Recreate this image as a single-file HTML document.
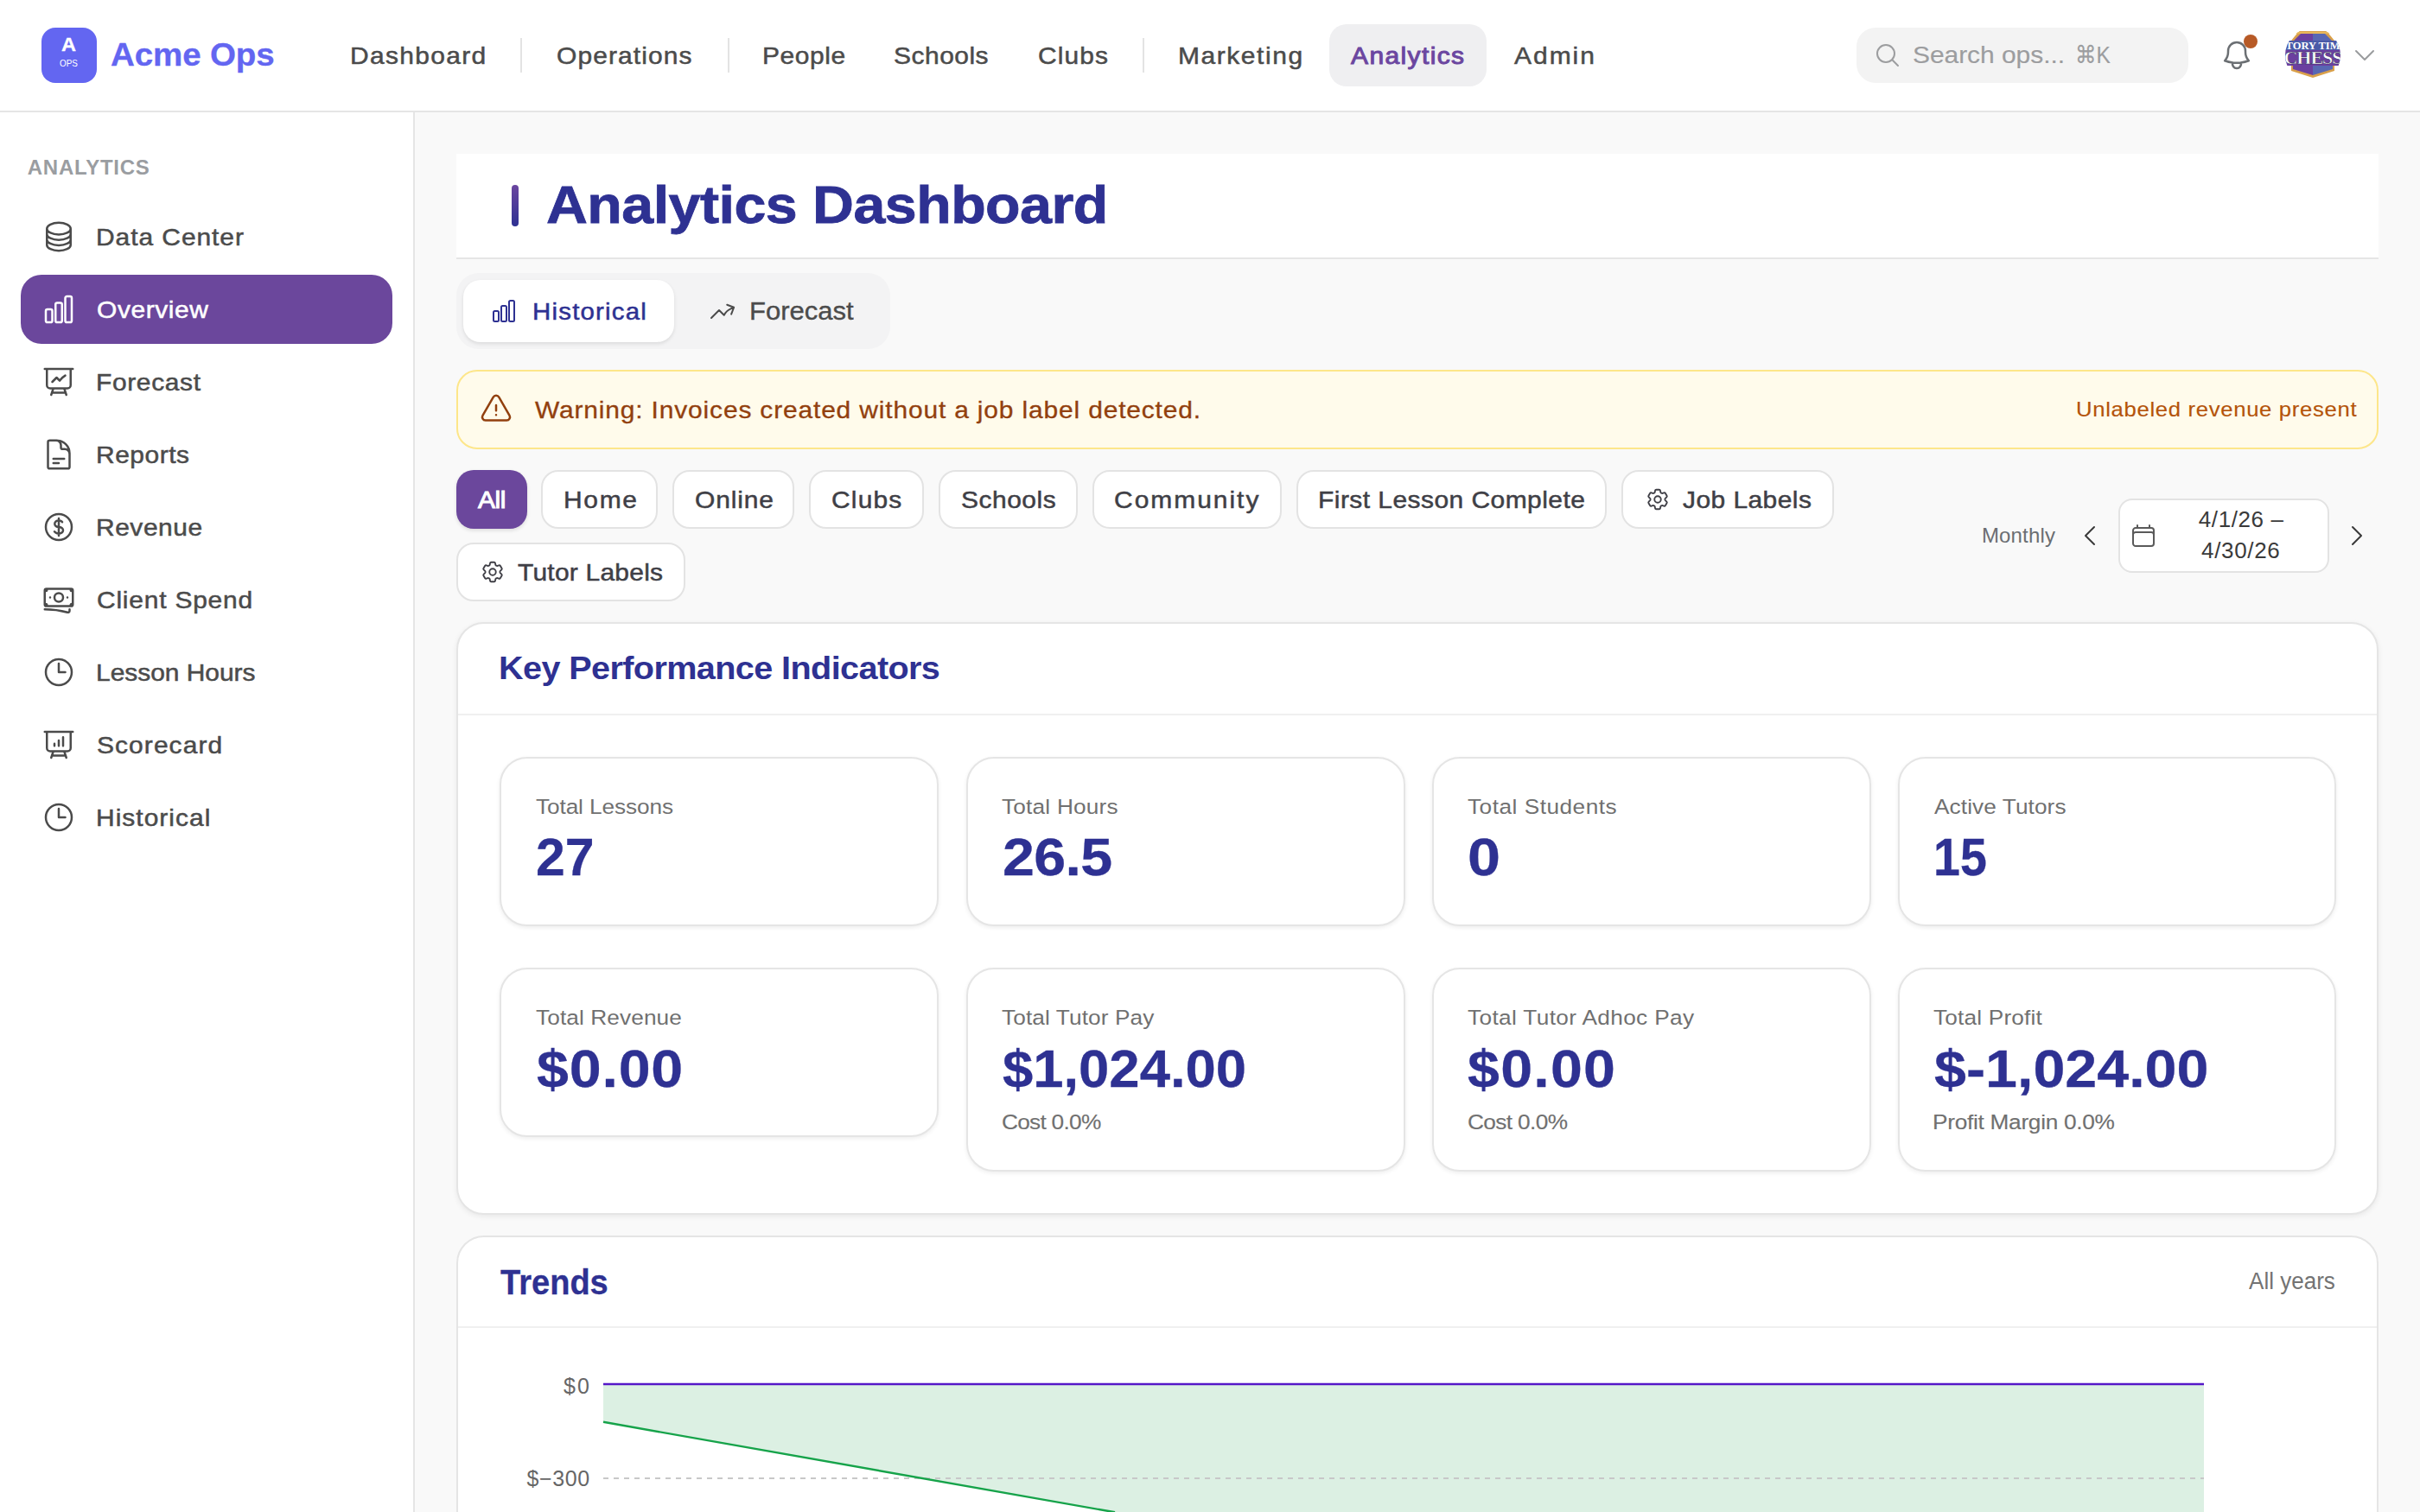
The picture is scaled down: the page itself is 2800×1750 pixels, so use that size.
<!DOCTYPE html>
<html><head><meta charset="utf-8"><title>Analytics Dashboard</title>
<style>
html,body{margin:0;padding:0;width:2800px;height:1750px;overflow:hidden;background:#fafafa;}
#root{position:relative;width:2800px;height:1750px;overflow:hidden;background:#f9f9f9;font-family:"Liberation Sans",sans-serif;}
.b{position:absolute;box-sizing:border-box;}
.t{position:absolute;white-space:nowrap;font-family:"Liberation Sans",sans-serif;}
.kc{border-radius:32px;background:#fff;border:2px solid #e5e5e5;box-shadow:0 2px 5px rgba(0,0,0,0.07);}
svg.i{position:absolute;overflow:visible;fill:none;stroke-linecap:round;stroke-linejoin:round;}
@media (max-width:2000px){#root{zoom:0.5;}html,body{width:1400px;height:875px;}}
</style></head><body><div id="root">
<!-- header -->
<div class="b" style="left:0;top:0;width:2800px;height:130px;background:#fff;border-bottom:2px solid #e5e5e5;"></div>
<div class="b" style="left:48px;top:32px;width:64px;height:64px;border-radius:16px;background:#6366f1;"></div>
<div class="b" style="left:602px;top:44px;width:2px;height:40px;background:#e3e3e3;"></div>
<div class="b" style="left:842px;top:44px;width:2px;height:40px;background:#e3e3e3;"></div>
<div class="b" style="left:1322px;top:44px;width:2px;height:40px;background:#e3e3e3;"></div>
<div class="b" style="left:1538px;top:28px;width:182px;height:72px;border-radius:20px;background:#efeff1;"></div>
<div class="b" style="left:2148px;top:32px;width:384px;height:64px;border-radius:22px;background:#f3f3f3;"></div>
<svg class="i" style="left:2168px;top:48px;width:32px;height:32px;stroke:#9c9d9f;stroke-width:1.5" viewBox="0 0 24 24"><path d="m21 21-5.197-5.197m0 0A7.5 7.5 0 1 0 5.196 5.196a7.5 7.5 0 0 0 10.607 10.607Z"/></svg>
<svg class="i" style="left:2568px;top:44px;width:40px;height:40px;stroke:#6b6f73;stroke-width:1.5" viewBox="0 0 24 24"><path d="M14.857 17.082a23.848 23.848 0 0 0 5.454-1.31A8.967 8.967 0 0 1 18 9.75V9A6 6 0 0 0 6 9v.75a8.967 8.967 0 0 1-2.312 6.022c1.733.64 3.56 1.085 5.455 1.31m5.714 0a24.255 24.255 0 0 1-5.714 0m5.714 0a3 3 0 1 1-5.714 0"/></svg>
<div class="b" style="left:2596px;top:40px;width:16px;height:16px;border-radius:8px;background:#b75a26;"></div>
<svg class="i" style="left:2644px;top:32px;width:64px;height:64px;" viewBox="0 0 64 64">
<defs><clipPath id="avc"><circle cx="32" cy="32" r="32"/></clipPath></defs>
<g clip-path="url(#avc)">
<polygon points="16,4 48,4 57,15 57,50 32,58 7,50 7,15" fill="#d9a04a"/>
<polygon points="18,7 32,7 32,55 9,48 9,16" fill="#6b3fa0"/>
<polygon points="32,7 46,7 55,16 55,48 32,55" fill="#5867b3"/>
<rect x="0" y="15" width="64" height="11" fill="#4a5aa8"/>
<text x="32" y="24.5" text-anchor="middle" font-family="Liberation Serif" font-weight="700" font-size="12.5" fill="#fff">TORY TIM</text>
<rect x="0" y="26" width="64" height="18" fill="#6b3fa0"/>
<text x="32" y="42" text-anchor="middle" font-family="Liberation Serif" font-weight="700" font-size="22" fill="#fff" stroke="#2a2a55" stroke-width="0.5" letter-spacing="-1">CHESS</text>
<rect x="0" y="5" width="64" height="2" fill="#e8b85a"/>
</g></svg>
<svg class="i" style="left:2720px;top:48px;width:32px;height:32px;stroke:#9a9c9e;stroke-width:1.5" viewBox="0 0 24 24"><path d="m19.5 8.25-7.5 7.5-7.5-7.5"/></svg>

<!-- sidebar -->
<div class="b" style="left:0;top:130px;width:480px;height:1620px;background:#fff;border-right:2px solid #e5e5e5;"></div>
<div class="b" style="left:24px;top:318px;width:430px;height:80px;border-radius:24px;background:#6b479c;"></div>
<svg class="i" style="left:48px;top:254px;width:40px;height:40px;stroke:#4b4b4b;stroke-width:1.5" viewBox="0 0 24 24"><path d="M20.25 6.375c0 2.278-3.694 4.125-8.25 4.125S3.75 8.653 3.75 6.375m16.5 0c0-2.278-3.694-4.125-8.25-4.125S3.75 4.097 3.75 6.375m16.5 0v11.25c0 2.278-3.694 4.125-8.25 4.125s-8.25-1.847-8.25-4.125V6.375m16.5 0v3.75m-16.5-3.75v3.75m16.5 0v3.75C20.250 16.153 16.556 18 12 18s-8.25-1.847-8.25-4.125v-3.75m16.5 0c0 2.278-3.694 4.125-8.25 4.125s-8.25-1.847-8.25-4.125"/></svg>
<svg class="i" style="left:48px;top:338px;width:40px;height:40px;stroke:#ffffff;stroke-width:1.5" viewBox="0 0 24 24"><path d="M3 13.125C3 12.504 3.504 12 4.125 12h2.25c.621 0 1.125.504 1.125 1.125v6.75C7.5 20.496 6.996 21 6.375 21h-2.25A1.125 1.125 0 0 1 3 19.875v-6.75ZM9.75 8.625c0-.621.504-1.125 1.125-1.125h2.25c.621 0 1.125.504 1.125 1.125v11.25c0 .621-.504 1.125-1.125 1.125h-2.25a1.125 1.125 0 0 1-1.125-1.125V8.625ZM16.5 4.125c0-.621.504-1.125 1.125-1.125h2.25C20.496 3 21 3.504 21 4.125v15.75c0 .621-.504 1.125-1.125 1.125h-2.25a1.125 1.125 0 0 1-1.125-1.125V4.125Z"/></svg>
<svg class="i" style="left:48px;top:422px;width:40px;height:40px;stroke:#4b4b4b;stroke-width:1.5" viewBox="0 0 24 24"><path d="M3.75 3v11.250A2.250 2.250 0 0 0 6 16.500h2.250M3.750 3h-1.500m1.500 0h16.500m0 0h1.500m-1.500 0v11.250A2.250 2.250 0 0 1 18 16.500h-2.250m-7.500 0h7.500m-7.500 0-1 3m8.500-3 1 3m0 0 .5 1.500m-.5-1.500h-9.500m0 0-.5 1.500m.750-9 3-3 2.148 2.148A12.061 12.061 0 0 1 16.500 7.605"/></svg>
<svg class="i" style="left:48px;top:506px;width:40px;height:40px;stroke:#4b4b4b;stroke-width:1.5" viewBox="0 0 24 24"><path d="M19.5 14.25v-2.625a3.375 3.375 0 0 0-3.375-3.375h-1.5A1.125 1.125 0 0 1 13.5 7.125v-1.5a3.375 3.375 0 0 0-3.375-3.375H8.25m0 12.75h7.5m-7.5 3H12M10.5 2.25H5.625c-.621 0-1.125.504-1.125 1.125v17.25c0 .621.504 1.125 1.125 1.125h12.75c.621 0 1.125-.504 1.125-1.125V11.25a9 9 0 0 0-9-9Z"/></svg>
<svg class="i" style="left:48px;top:590px;width:40px;height:40px;stroke:#4b4b4b;stroke-width:1.5" viewBox="0 0 24 24"><path d="M12 6v12m-3-2.818.879.659c1.171.879 3.07.879 4.242 0 1.172-.879 1.172-2.303 0-3.182C13.536 12.219 12.768 12 12 12c-.725 0-1.45-.22-2.003-.659-1.106-.879-1.106-2.303 0-3.182s2.9-.879 4.006 0l.415.33M21 12a9 9 0 1 1-18 0 9 9 0 0 1 18 0Z"/></svg>
<svg class="i" style="left:48px;top:674px;width:40px;height:40px;stroke:#4b4b4b;stroke-width:1.5" viewBox="0 0 24 24"><path d="M2.25 18.75a60.07 60.07 0 0 1 15.797 2.101c.727.198 1.453-.342 1.453-1.096V18.75M3.75 4.5v.75A.75.75 0 0 1 3 6h-.75m0 0v-.375c0-.621.504-1.125 1.125-1.125H20.25M2.25 6v9m18-10.5v.75c0 .414.336.75.75.75h.75m-1.5-1.5h.375c.621 0 1.125.504 1.125 1.125v9.75c0 .621-.504 1.125-1.125 1.125h-.375m1.5-1.5H21a.75.75 0 0 0-.75.75v.75m0 0H3.75m0 0h-.375a1.125 1.125 0 0 1-1.125-1.125V15m1.5 1.5v-.75A.75.75 0 0 0 3 15h-.75M15 10.5a3 3 0 1 1-6 0 3 3 0 0 1 6 0Zm3 0h.008v.008H18V10.5Zm-12 0h.008v.008H6V10.5Z"/></svg>
<svg class="i" style="left:48px;top:758px;width:40px;height:40px;stroke:#4b4b4b;stroke-width:1.5" viewBox="0 0 24 24"><path d="M12 6v6h4.5m4.5 0a9 9 0 1 1-18 0 9 9 0 0 1 18 0Z"/></svg>
<svg class="i" style="left:48px;top:842px;width:40px;height:40px;stroke:#4b4b4b;stroke-width:1.5" viewBox="0 0 24 24"><path d="M3.75 3v11.25A2.25 2.25 0 0 0 6 16.5h2.25M3.75 3h-1.5m1.5 0h16.5m0 0h1.5m-1.5 0v11.25A2.25 2.25 0 0 1 18 16.5h-2.25m-7.5 0h7.5m-7.5 0-1 3m8.5-3 1 3m0 0 .5 1.5m-.5-1.5h-9.5m0 0-.5 1.5M9 11.25v1.5M12 9v3.75m3-6v6"/></svg>
<svg class="i" style="left:48px;top:926px;width:40px;height:40px;stroke:#4b4b4b;stroke-width:1.5" viewBox="0 0 24 24"><path d="M12 6v6h4.5m4.5 0a9 9 0 1 1-18 0 9 9 0 0 1 18 0Z"/></svg>

<!-- title card -->
<div class="b" style="left:528px;top:178px;width:2224px;height:122px;background:#fff;border-bottom:2px solid #e5e5e5;"></div>
<div class="b" style="left:592px;top:214px;width:8px;height:48px;border-radius:4px;background:linear-gradient(#6b46a0,#2e3192);"></div>

<!-- tabs -->
<div class="b" style="left:528px;top:316px;width:502px;height:88px;border-radius:26px;background:#f3f3f4;"></div>
<div class="b" style="left:536px;top:324px;width:244px;height:72px;border-radius:20px;background:#fff;box-shadow:0 2px 4px rgba(0,0,0,0.10);"></div>
<svg class="i" style="left:567px;top:344px;width:32px;height:32px;stroke:#2e3192;stroke-width:1.5" viewBox="0 0 24 24"><path d="M3 13.125C3 12.504 3.504 12 4.125 12h2.25c.621 0 1.125.504 1.125 1.125v6.75C7.5 20.496 6.996 21 6.375 21h-2.25A1.125 1.125 0 0 1 3 19.875v-6.75ZM9.75 8.625c0-.621.504-1.125 1.125-1.125h2.25c.621 0 1.125.504 1.125 1.125v11.25c0 .621-.504 1.125-1.125 1.125h-2.25a1.125 1.125 0 0 1-1.125-1.125V8.625ZM16.5 4.125c0-.621.504-1.125 1.125-1.125h2.25C20.496 3 21 3.504 21 4.125v15.75c0 .621-.504 1.125-1.125 1.125h-2.25a1.125 1.125 0 0 1-1.125-1.125V4.125Z"/></svg>
<svg class="i" style="left:820px;top:344px;width:32px;height:32px;stroke:#4b4b4b;stroke-width:1.5" viewBox="0 0 24 24"><path d="M2.25 18 9 11.25l4.306 4.306a11.95 11.95 0 0 1 5.814-5.518l2.74-1.22m0 0-5.94-2.281m5.94 2.28-2.28 5.941"/></svg>

<!-- warning -->
<div class="b" style="left:528px;top:428px;width:2224px;height:92px;border-radius:24px;background:#fffbeb;border:2px solid #fde68a;"></div>
<svg class="i" style="left:554px;top:454px;width:40px;height:40px;stroke:#92400e;stroke-width:1.5" viewBox="0 0 24 24"><path d="M12 9v3.75m-9.303 3.376c-.866 1.5.217 3.374 1.948 3.374h14.71c1.73 0 2.813-1.874 1.948-3.374L13.949 3.378c-.866-1.5-3.032-1.5-3.898 0L2.697 16.126ZM12 15.75h.007v.008H12v-.008Z"/></svg>

<!-- chips -->
<div class="b" style="left:528px;top:544px;width:82px;height:68px;border-radius:20px;background:#6b479c;box-shadow:0 2px 4px rgba(0,0,0,0.12);"></div>
<div class="b chip" style="left:626px;top:544px;width:135px;height:68px;border-radius:20px;background:#fff;border:2px solid #e3e3e3;"></div>
<div class="b chip" style="left:778px;top:544px;width:141px;height:68px;border-radius:20px;background:#fff;border:2px solid #e3e3e3;"></div>
<div class="b chip" style="left:936px;top:544px;width:133px;height:68px;border-radius:20px;background:#fff;border:2px solid #e3e3e3;"></div>
<div class="b chip" style="left:1086px;top:544px;width:161px;height:68px;border-radius:20px;background:#fff;border:2px solid #e3e3e3;"></div>
<div class="b chip" style="left:1264px;top:544px;width:219px;height:68px;border-radius:20px;background:#fff;border:2px solid #e3e3e3;"></div>
<div class="b chip" style="left:1500px;top:544px;width:359px;height:68px;border-radius:20px;background:#fff;border:2px solid #e3e3e3;"></div>
<div class="b chip" style="left:1876px;top:544px;width:246px;height:68px;border-radius:20px;background:#fff;border:2px solid #e3e3e3;"></div>
<div class="b chip" style="left:528px;top:628px;width:265px;height:68px;border-radius:20px;background:#fff;border:2px solid #e3e3e3;"></div>
<svg class="i" style="left:1903px;top:563px;width:30px;height:30px;stroke:#3f3f46;stroke-width:1.5" viewBox="0 0 24 24"><path d="M9.594 3.94c.09-.542.56-.94 1.11-.94h2.593c.55 0 1.02.398 1.11.94l.213 1.281c.063.374.313.686.645.87.074.04.147.083.22.127.325.196.72.257 1.075.124l1.217-.456a1.125 1.125 0 0 1 1.37.49l1.296 2.247a1.125 1.125 0 0 1-.26 1.431l-1.003.827c-.293.241-.438.613-.43.992a7.723 7.723 0 0 1 0 .255c-.008.378.137.75.43.991l1.004.827c.424.35.534.955.26 1.43l-1.298 2.247a1.125 1.125 0 0 1-1.369.491l-1.217-.456c-.355-.133-.75-.072-1.076.124a6.47 6.47 0 0 1-.22.128c-.331.183-.581.495-.644.869l-.213 1.281c-.09.543-.56.94-1.11.94h-2.594c-.55 0-1.019-.398-1.11-.94l-.213-1.281c-.062-.374-.312-.686-.644-.87a6.52 6.520 0 0 1-.22-.127c-.325-.196-.72-.257-1.076-.124l-1.217.456a1.125 1.125 0 0 1-1.369-.49l-1.297-2.247a1.125 1.125 0 0 1 .26-1.431l1.004-.827c.292-.24.437-.613.43-.991a6.932 6.932 0 0 1 0-.255c.007-.38-.138-.751-.43-.992l-1.004-.827a1.125 1.125 0 0 1-.26-1.43l1.297-2.247a1.125 1.125 0 0 1 1.37-.491l1.216.456c.356.133.751.072 1.076-.124.072-.044.146-.086.22-.128.332-.183.582-.495.644-.869l.214-1.28Z"/><path d="M15 12a3 3 0 1 1-6 0 3 3 0 0 1 6 0Z"/></svg>
<svg class="i" style="left:555px;top:647px;width:30px;height:30px;stroke:#3f3f46;stroke-width:1.5" viewBox="0 0 24 24"><path d="M9.594 3.94c.09-.542.56-.94 1.11-.94h2.593c.55 0 1.02.398 1.11.94l.213 1.281c.063.374.313.686.645.87.074.04.147.083.22.127.325.196.72.257 1.075.124l1.217-.456a1.125 1.125 0 0 1 1.37.49l1.296 2.247a1.125 1.125 0 0 1-.26 1.431l-1.003.827c-.293.241-.438.613-.43.992a7.723 7.723 0 0 1 0 .255c-.008.378.137.75.43.991l1.004.827c.424.35.534.955.26 1.43l-1.298 2.247a1.125 1.125 0 0 1-1.369.491l-1.217-.456c-.355-.133-.75-.072-1.076.124a6.47 6.47 0 0 1-.22.128c-.331.183-.581.495-.644.869l-.213 1.281c-.09.543-.56.94-1.110.94h-2.594c-.55 0-1.019-.398-1.11-.94l-.213-1.281c-.062-.374-.312-.686-.644-.87a6.52 6.52 0 0 1-.22-.127c-.325-.196-.72-.257-1.076-.124l-1.217.456a1.125 1.125 0 0 1-1.369-.49l-1.297-2.247a1.125 1.125 0 0 1 .26-1.431l1.004-.827c.292-.24.437-.613.43-.991a6.932 6.932 0 0 1 0-.255c.007-.38-.138-.751-.43-.992l-1.004-.827a1.125 1.125 0 0 1-.26-1.43l1.297-2.247a1.125 1.125 0 0 1 1.37-.491l1.216.456c.356.133.751.072 1.076-.124.072-.044.146-.086.22-.128.332-.183.582-.495.644-.869l.214-1.28Z"/><path d="M15 12a3 3 0 1 1-6 0 3 3 0 0 1 6 0Z"/></svg>

<!-- date controls -->
<svg class="i" style="left:2402px;top:604px;width:32px;height:32px;stroke:#3a3a3a;stroke-width:1.5" viewBox="0 0 24 24"><path d="M15.75 19.5 8.25 12l7.5-7.5"/></svg>
<div class="b" style="left:2451px;top:577px;width:244px;height:86px;border-radius:16px;background:#fff;border:2px solid #e3e3e3;"></div>
<svg class="i" style="left:2464px;top:604px;width:32px;height:32px;stroke:#5a5a5a;stroke-width:1.5" viewBox="0 0 24 24"><path d="M6.75 3v2.25M17.25 3v2.25M3 18.75V7.5a2.25 2.25 0 0 1 2.25-2.25h13.5A2.25 2.25 0 0 1 21 7.5v11.25m-18 0A2.25 2.25 0 0 0 5.25 21h13.5A2.25 2.25 0 0 0 21 18.75m-18 0v-7.5A2.25 2.25 0 0 1 5.25 9h13.5A2.25 2.25 0 0 1 21 11.25v7.5"/></svg>
<svg class="i" style="left:2711px;top:604px;width:32px;height:32px;stroke:#3a3a3a;stroke-width:1.5" viewBox="0 0 24 24"><path d="m8.25 4.5 7.5 7.5-7.5 7.5"/></svg>

<!-- KPI card -->
<div class="b" style="left:528px;top:720px;width:2224px;height:686px;border-radius:32px;background:#fff;border:2px solid #e5e5e5;box-shadow:0 2px 6px rgba(0,0,0,0.07);"></div>
<div class="b" style="left:530px;top:826px;width:2220px;height:2px;background:#f0f0f0;"></div>
<div class="b kc" style="left:578px;top:876px;width:508px;height:196px;"></div>
<div class="b kc" style="left:1118px;top:876px;width:508px;height:196px;"></div>
<div class="b kc" style="left:1657px;top:876px;width:508px;height:196px;"></div>
<div class="b kc" style="left:2196px;top:876px;width:507px;height:196px;"></div>
<div class="b kc" style="left:578px;top:1120px;width:508px;height:196px;"></div>
<div class="b kc" style="left:1118px;top:1120px;width:508px;height:236px;"></div>
<div class="b kc" style="left:1657px;top:1120px;width:508px;height:236px;"></div>
<div class="b kc" style="left:2196px;top:1120px;width:507px;height:236px;"></div>

<!-- trends card -->
<div class="b" style="left:528px;top:1430px;width:2224px;height:400px;border-radius:32px;background:#fff;border:2px solid #e5e5e5;"></div>
<div class="b" style="left:530px;top:1535px;width:2220px;height:2px;background:#f0f0f0;"></div>
<svg style="position:absolute;left:0;top:0;width:2800px;height:1750px;" viewBox="0 0 2800 1750">
<polygon points="698,1602 2550,1602 2550,1750 1290,1750 698,1645.5" fill="#dcf0e3"/>
<line x1="698" y1="1711" x2="2550" y2="1711" stroke="#c8c8c8" stroke-width="2" stroke-dasharray="6 6"/>
<line x1="698" y1="1602" x2="2550" y2="1602" stroke="#5518c8" stroke-width="2.4"/>
<line x1="698" y1="1645.8" x2="1290" y2="1750.3" stroke="#16a34a" stroke-width="2.4"/>
</svg>
<div class="t" style="left:71.0px;top:41.0px;font-size:22px;line-height:22px;color:#ffffff;font-weight:700;transform:scaleX(1.0700);transform-origin:0 0;-webkit-text-stroke:0.3px #ffffff;">A</div>
<div class="t" style="left:69.4px;top:68.0px;font-size:11px;line-height:11px;color:#ffffff;transform:scaleX(0.9043);transform-origin:0 0;">OPS</div>
<div class="t" style="left:127.6px;top:46.0px;font-size:36px;line-height:36px;color:#6366f1;font-weight:700;letter-spacing:-0.11px;transform:scaleX(1.0700);transform-origin:0 0;-webkit-text-stroke:0.3px #6366f1;">Acme Ops</div>
<div class="t" style="left:405.0px;top:51.0px;font-size:28px;line-height:28px;color:#4b4b4b;letter-spacing:1.24px;transform:scaleX(1.0700);transform-origin:0 0;-webkit-text-stroke:0.5px #4b4b4b;">Dashboard</div>
<div class="t" style="left:644.0px;top:51.0px;font-size:28px;line-height:28px;color:#4b4b4b;letter-spacing:1.04px;transform:scaleX(1.0700);transform-origin:0 0;-webkit-text-stroke:0.5px #4b4b4b;">Operations</div>
<div class="t" style="left:882.0px;top:51.0px;font-size:28px;line-height:28px;color:#4b4b4b;letter-spacing:0.56px;transform:scaleX(1.0700);transform-origin:0 0;-webkit-text-stroke:0.5px #4b4b4b;">People</div>
<div class="t" style="left:1034.0px;top:51.0px;font-size:28px;line-height:28px;color:#4b4b4b;letter-spacing:0.47px;transform:scaleX(1.0700);transform-origin:0 0;-webkit-text-stroke:0.5px #4b4b4b;">Schools</div>
<div class="t" style="left:1200.5px;top:51.0px;font-size:28px;line-height:28px;color:#4b4b4b;letter-spacing:1.05px;transform:scaleX(1.0700);transform-origin:0 0;-webkit-text-stroke:0.5px #4b4b4b;">Clubs</div>
<div class="t" style="left:1362.5px;top:51.0px;font-size:28px;line-height:28px;color:#4b4b4b;letter-spacing:1.46px;transform:scaleX(1.0700);transform-origin:0 0;-webkit-text-stroke:0.5px #4b4b4b;">Marketing</div>
<div class="t" style="left:1562.8px;top:51.0px;font-size:28px;line-height:28px;color:#6b46a0;letter-spacing:1.31px;transform:scaleX(1.0700);transform-origin:0 0;-webkit-text-stroke:1.0px #6b46a0;">Analytics</div>
<div class="t" style="left:1752.0px;top:51.0px;font-size:28px;line-height:28px;color:#4b4b4b;letter-spacing:1.87px;transform:scaleX(1.0700);transform-origin:0 0;-webkit-text-stroke:0.5px #4b4b4b;">Admin</div>
<div class="t" style="left:2212.5px;top:50.4px;font-size:28px;line-height:28px;color:#9c9d9f;letter-spacing:-0.04px;transform:scaleX(1.0700);transform-origin:0 0;-webkit-text-stroke:0.15px #9c9d9f;">Search ops...</div>
<div class="t" style="left:2401.3px;top:50.4px;font-size:28px;line-height:28px;color:#9c9d9f;transform:scaleX(0.8742);transform-origin:0 0;-webkit-text-stroke:0.15px #9c9d9f;">⌘K</div>
<div class="t" style="left:31.8px;top:181.8px;font-size:24px;line-height:24px;color:#9a9da1;font-weight:700;letter-spacing:0.74px;">ANALYTICS</div>
<div class="t" style="left:111.4px;top:261.0px;font-size:28px;line-height:28px;color:#4b4b4b;letter-spacing:0.88px;transform:scaleX(1.0700);transform-origin:0 0;-webkit-text-stroke:0.5px #4b4b4b;">Data Center</div>
<div class="t" style="left:112.4px;top:345.0px;font-size:28px;line-height:28px;color:#ffffff;letter-spacing:0.55px;transform:scaleX(1.0700);transform-origin:0 0;-webkit-text-stroke:0.5px #ffffff;">Overview</div>
<div class="t" style="left:111.4px;top:429.0px;font-size:28px;line-height:28px;color:#4b4b4b;letter-spacing:0.59px;transform:scaleX(1.0700);transform-origin:0 0;-webkit-text-stroke:0.5px #4b4b4b;">Forecast</div>
<div class="t" style="left:111.4px;top:513.0px;font-size:28px;line-height:28px;color:#4b4b4b;letter-spacing:0.48px;transform:scaleX(1.0700);transform-origin:0 0;-webkit-text-stroke:0.5px #4b4b4b;">Reports</div>
<div class="t" style="left:111.4px;top:597.0px;font-size:28px;line-height:28px;color:#4b4b4b;letter-spacing:0.50px;transform:scaleX(1.0700);transform-origin:0 0;-webkit-text-stroke:0.5px #4b4b4b;">Revenue</div>
<div class="t" style="left:112.4px;top:681.0px;font-size:28px;line-height:28px;color:#4b4b4b;letter-spacing:0.73px;transform:scaleX(1.0700);transform-origin:0 0;-webkit-text-stroke:0.5px #4b4b4b;">Client Spend</div>
<div class="t" style="left:111.4px;top:765.0px;font-size:28px;line-height:28px;color:#4b4b4b;letter-spacing:-0.03px;transform:scaleX(1.0700);transform-origin:0 0;-webkit-text-stroke:0.5px #4b4b4b;">Lesson Hours</div>
<div class="t" style="left:112.4px;top:849.0px;font-size:28px;line-height:28px;color:#4b4b4b;letter-spacing:1.00px;transform:scaleX(1.0700);transform-origin:0 0;-webkit-text-stroke:0.5px #4b4b4b;">Scorecard</div>
<div class="t" style="left:111.4px;top:933.0px;font-size:28px;line-height:28px;color:#4b4b4b;letter-spacing:0.95px;transform:scaleX(1.0700);transform-origin:0 0;-webkit-text-stroke:0.5px #4b4b4b;">Historical</div>
<div class="t" style="left:632.0px;top:206.0px;font-size:62px;line-height:62px;color:#2e3192;font-weight:700;letter-spacing:-0.50px;transform:scaleX(1.0700);transform-origin:0 0;-webkit-text-stroke:0.8px #2e3192;">Analytics Dashboard</div>
<div class="t" style="left:615.5px;top:346.9px;font-size:27.5px;line-height:27.5px;color:#2e3192;letter-spacing:1.13px;transform:scaleX(1.0700);transform-origin:0 0;-webkit-text-stroke:0.5px #2e3192;">Historical</div>
<div class="t" style="left:867.4px;top:346.0px;font-size:29px;line-height:29px;color:#4b4b4b;transform:scaleX(1.0700);transform-origin:0 0;-webkit-text-stroke:0.35px #4b4b4b;">Forecast</div>
<div class="t" style="left:618.9px;top:461.0px;font-size:28px;line-height:28px;color:#92400e;letter-spacing:0.78px;transform:scaleX(1.0700);transform-origin:0 0;-webkit-text-stroke:0.3px #92400e;">Warning: Invoices created without a job label detected.</div>
<div class="t" style="left:2401.7px;top:462.2px;font-size:24px;line-height:24px;color:#b45309;letter-spacing:0.63px;transform:scaleX(1.0700);transform-origin:0 0;-webkit-text-stroke:0.15px #b45309;">Unlabeled revenue present</div>
<div class="t" style="left:553.3px;top:565.0px;font-size:28px;line-height:28px;color:#ffffff;letter-spacing:-0.37px;transform:scaleX(1.0700);transform-origin:0 0;-webkit-text-stroke:1.0px #ffffff;">All</div>
<div class="t" style="left:651.5px;top:565.0px;font-size:28px;line-height:28px;color:#3f3f46;letter-spacing:1.59px;transform:scaleX(1.0700);transform-origin:0 0;-webkit-text-stroke:0.5px #3f3f46;">Home</div>
<div class="t" style="left:804.0px;top:565.0px;font-size:28px;line-height:28px;color:#3f3f46;letter-spacing:0.80px;transform:scaleX(1.0700);transform-origin:0 0;-webkit-text-stroke:0.5px #3f3f46;">Online</div>
<div class="t" style="left:962.3px;top:565.0px;font-size:28px;line-height:28px;color:#3f3f46;letter-spacing:1.10px;transform:scaleX(1.0700);transform-origin:0 0;-webkit-text-stroke:0.5px #3f3f46;">Clubs</div>
<div class="t" style="left:1111.6px;top:565.0px;font-size:28px;line-height:28px;color:#3f3f46;letter-spacing:0.48px;transform:scaleX(1.0700);transform-origin:0 0;-webkit-text-stroke:0.5px #3f3f46;">Schools</div>
<div class="t" style="left:1289.3px;top:565.0px;font-size:28px;line-height:28px;color:#3f3f46;letter-spacing:1.86px;transform:scaleX(1.0700);transform-origin:0 0;-webkit-text-stroke:0.5px #3f3f46;">Community</div>
<div class="t" style="left:1525.0px;top:565.0px;font-size:28px;line-height:28px;color:#3f3f46;letter-spacing:0.43px;transform:scaleX(1.0700);transform-origin:0 0;-webkit-text-stroke:0.5px #3f3f46;">First Lesson Complete</div>
<div class="t" style="left:1947.0px;top:565.0px;font-size:28px;line-height:28px;color:#3f3f46;letter-spacing:0.41px;transform:scaleX(1.0700);transform-origin:0 0;-webkit-text-stroke:0.5px #3f3f46;">Job Labels</div>
<div class="t" style="left:599.3px;top:649.4px;font-size:28px;line-height:28px;color:#3f3f46;letter-spacing:0.22px;transform:scaleX(1.0700);transform-origin:0 0;-webkit-text-stroke:0.5px #3f3f46;">Tutor Labels</div>
<div class="t" style="left:2292.9px;top:607.7px;font-size:24px;line-height:24px;color:#6b6e72;letter-spacing:0.17px;">Monthly</div>
<div class="t" style="left:2543.8px;top:587.8px;font-size:26px;line-height:26px;color:#3a3a3a;letter-spacing:0.60px;">4/1/26 –</div>
<div class="t" style="left:2547.1px;top:623.9px;font-size:26px;line-height:26px;color:#3a3a3a;letter-spacing:0.65px;">4/30/26</div>
<div class="t" style="left:576.6px;top:755.2px;font-size:37px;line-height:37px;color:#2e3192;font-weight:700;letter-spacing:-0.56px;transform:scaleX(1.0700);transform-origin:0 0;">Key Performance Indicators</div>
<div class="t" style="left:619.8px;top:922.1px;font-size:24.5px;line-height:24.5px;color:#707070;letter-spacing:-0.10px;transform:scaleX(1.0700);transform-origin:0 0;">Total Lessons</div>
<div class="t" style="left:620.3px;top:961.4px;font-size:62px;line-height:62px;color:#2e3192;font-weight:700;transform:scaleX(0.9801);transform-origin:0 0;-webkit-text-stroke:0.3px #2e3192;">27</div>
<div class="t" style="left:1159.0px;top:922.1px;font-size:24.5px;line-height:24.5px;color:#707070;letter-spacing:0.19px;transform:scaleX(1.0700);transform-origin:0 0;">Total Hours</div>
<div class="t" style="left:1159.5px;top:961.4px;font-size:62px;line-height:62px;color:#2e3192;font-weight:700;letter-spacing:-0.62px;transform:scaleX(1.0700);transform-origin:0 0;-webkit-text-stroke:0.3px #2e3192;">26.5</div>
<div class="t" style="left:1697.5px;top:922.1px;font-size:24.5px;line-height:24.5px;color:#707070;letter-spacing:0.47px;transform:scaleX(1.0700);transform-origin:0 0;">Total Students</div>
<div class="t" style="left:1698.0px;top:961.4px;font-size:62px;line-height:62px;color:#2e3192;font-weight:700;transform:scaleX(1.1024);transform-origin:0 0;-webkit-text-stroke:0.3px #2e3192;">0</div>
<div class="t" style="left:2238.3px;top:922.1px;font-size:24.5px;line-height:24.5px;color:#707070;letter-spacing:0.08px;transform:scaleX(1.0700);transform-origin:0 0;">Active Tutors</div>
<div class="t" style="left:2236.8px;top:961.4px;font-size:62px;line-height:62px;color:#2e3192;font-weight:700;transform:scaleX(0.8969);transform-origin:0 0;-webkit-text-stroke:0.3px #2e3192;">15</div>
<div class="t" style="left:619.8px;top:1166.4px;font-size:24.5px;line-height:24.5px;color:#707070;letter-spacing:0.10px;transform:scaleX(1.0700);transform-origin:0 0;">Total Revenue</div>
<div class="t" style="left:620.6px;top:1206.3px;font-size:62px;line-height:62px;color:#2e3192;font-weight:700;letter-spacing:0.75px;transform:scaleX(1.0700);transform-origin:0 0;-webkit-text-stroke:0.3px #2e3192;">$0.00</div>
<div class="t" style="left:1159.0px;top:1166.4px;font-size:24.5px;line-height:24.5px;color:#707070;letter-spacing:0.10px;transform:scaleX(1.0700);transform-origin:0 0;">Total Tutor Pay</div>
<div class="t" style="left:1159.8px;top:1206.3px;font-size:62px;line-height:62px;color:#2e3192;font-weight:700;transform:scaleX(1.0224);transform-origin:0 0;-webkit-text-stroke:0.3px #2e3192;">$1,024.00</div>
<div class="t" style="left:1159.0px;top:1286.6px;font-size:24.5px;line-height:24.5px;color:#707070;letter-spacing:-0.67px;transform:scaleX(1.0700);transform-origin:0 0;-webkit-text-stroke:0.15px #707070;">Cost 0.0%</div>
<div class="t" style="left:1697.5px;top:1166.4px;font-size:24.5px;line-height:24.5px;color:#707070;letter-spacing:0.33px;transform:scaleX(1.0700);transform-origin:0 0;">Total Tutor Adhoc Pay</div>
<div class="t" style="left:1698.3px;top:1206.3px;font-size:62px;line-height:62px;color:#2e3192;font-weight:700;letter-spacing:1.17px;transform:scaleX(1.0700);transform-origin:0 0;-webkit-text-stroke:0.3px #2e3192;">$0.00</div>
<div class="t" style="left:1697.5px;top:1286.6px;font-size:24.5px;line-height:24.5px;color:#707070;letter-spacing:-0.58px;transform:scaleX(1.0700);transform-origin:0 0;-webkit-text-stroke:0.15px #707070;">Cost 0.0%</div>
<div class="t" style="left:2237.3px;top:1166.4px;font-size:24.5px;line-height:24.5px;color:#707070;letter-spacing:0.17px;transform:scaleX(1.0700);transform-origin:0 0;">Total Profit</div>
<div class="t" style="left:2238.1px;top:1206.3px;font-size:62px;line-height:62px;color:#2e3192;font-weight:700;letter-spacing:0.02px;transform:scaleX(1.0700);transform-origin:0 0;-webkit-text-stroke:0.3px #2e3192;">$-1,024.00</div>
<div class="t" style="left:2236.3px;top:1286.6px;font-size:24.5px;line-height:24.5px;color:#707070;letter-spacing:-0.26px;transform:scaleX(1.0700);transform-origin:0 0;-webkit-text-stroke:0.15px #707070;">Profit Margin 0.0%</div>
<div class="t" style="left:578.7px;top:1463.5px;font-size:40px;line-height:40px;color:#2e3192;font-weight:700;transform:scaleX(0.9515);transform-origin:0 0;-webkit-text-stroke:0.3px #2e3192;">Trends</div>
<div class="t" style="left:2601.6px;top:1470.4px;font-size:27px;line-height:27px;color:#737373;transform:scaleX(0.9649);transform-origin:0 0;">All years</div>
<div class="t" style="left:651.9px;top:1591.9px;font-size:25px;line-height:25px;color:#666666;letter-spacing:2.10px;">$0</div>
<div class="t" style="left:609.6px;top:1699.3px;font-size:25px;line-height:25px;color:#666666;letter-spacing:0.60px;">$−300</div>
</div></body></html>
